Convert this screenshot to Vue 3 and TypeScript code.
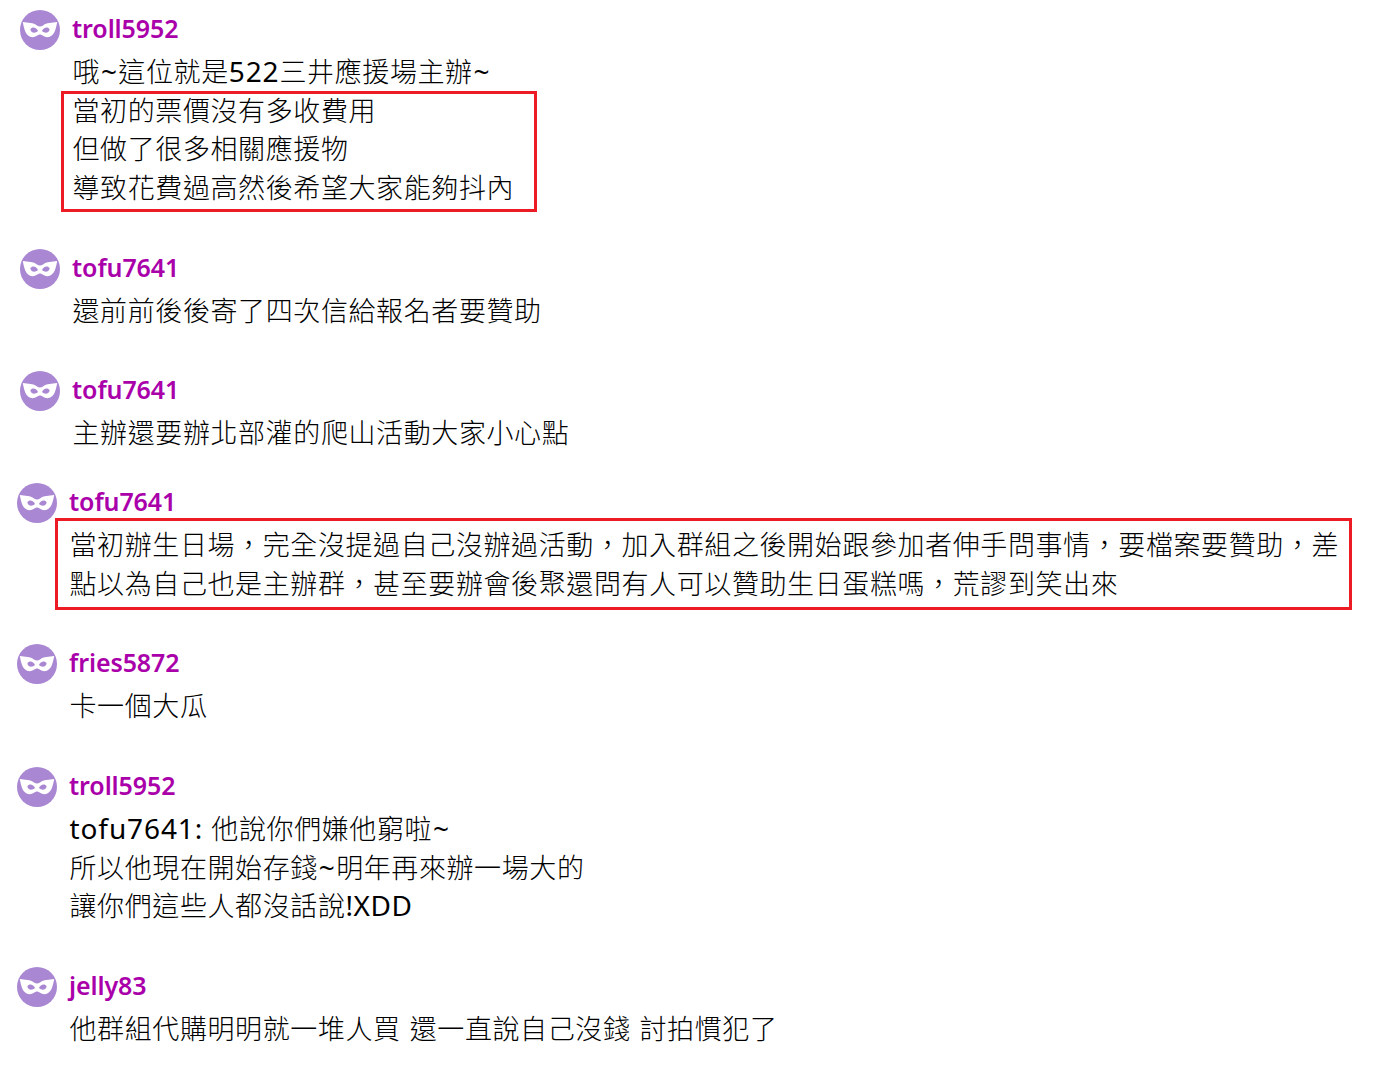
<template>
  <main class="thread">
    <section v-for="(group, g) in groups" :key="g" class="group" :class="{ shifted: g > 0 }">
      <article v-for="(message, m) in group" :key="m" class="message">
        <svg class="avatar" viewBox="0 0 40 40" aria-hidden="true">
          <defs>
            <filter :id="`soft-${g}-${m}`" x="-10%" y="-20%" width="120%" height="140%">
              <feGaussianBlur stdDeviation="0.75" />
            </filter>
          </defs>
          <circle cx="20" cy="20" r="20" fill="#aa87d2" />
          <path :filter="`url(#soft-${g}-${m})`" fill="#fff" fill-rule="evenodd" :d="maskPath" />
        </svg>
        <div class="content">
          <div class="name">{{ message.name }}</div>
          <div class="body">
            <div
              v-for="(block, b) in message.blocks"
              :key="b"
              class="block"
              :class="block.mark ? ['marked', block.mark] : []"
            >
              <p v-for="(line, l) in block.lines" :key="l" class="line">
                <span v-for="(run, r) in splitRuns(line)" :key="r" :class="runClass(run)">{{ run }}</span>
              </p>
            </div>
          </div>
        </div>
      </article>
    </section>
  </main>
</template>

<script setup lang="ts">
interface Block {
  lines: string[]
  mark?: 'narrow' | 'wide'
}

interface Message {
  name: string
  blocks: Block[]
}

const maskPath =
  'M2.8 12 C8 12.6 13.5 12.8 17 15.4 Q20 17.6 23 15.4 C26.5 12.8 32 12.6 37.2 12 ' +
  'C36 18.5 34.5 26.8 27.5 27.2 C23.8 27.2 22 24.6 20 24.6 C18 24.6 16.2 27.2 12.5 27.2 C5.5 26.8 4 18.5 2.8 12 Z ' +
  'M10.4 19.2 C10.6 22.6 14.8 24 18 21 C16.6 17.2 12 16.4 10.4 19.2 Z ' +
  'M29.6 19.2 C29.4 22.6 25.2 24 22 21 C23.4 17.2 28 16.4 29.6 19.2 Z'

const groups: Message[][] = [
  [
    {
      name: 'troll5952',
      blocks: [
        { lines: ['哦~這位就是522三井應援場主辦~'] },
        { lines: ['當初的票價沒有多收費用', '但做了很多相關應援物', '導致花費過高然後希望大家能夠抖內'], mark: 'narrow' }
      ]
    },
    { name: 'tofu7641', blocks: [{ lines: ['還前前後後寄了四次信給報名者要贊助'] }] },
    { name: 'tofu7641', blocks: [{ lines: ['主辦還要辦北部灌的爬山活動大家小心點'] }] }
  ],
  [
    {
      name: 'tofu7641',
      blocks: [
        {
          lines: [
            '當初辦生日場，完全沒提過自己沒辦過活動，加入群組之後開始跟參加者伸手問事情，要檔案要贊助，差',
            '點以為自己也是主辦群，甚至要辦會後聚還問有人可以贊助生日蛋糕嗎，荒謬到笑出來'
          ],
          mark: 'wide'
        }
      ]
    },
    { name: 'fries5872', blocks: [{ lines: ['卡一個大瓜'] }] },
    {
      name: 'troll5952',
      blocks: [{ lines: ['tofu7641: 他說你們嫌他窮啦~', '所以他現在開始存錢~明年再來辦一場大的', '讓你們這些人都沒話說!XDD'] }]
    },
    { name: 'jelly83', blocks: [{ lines: ['他群組代購明明就一堆人買 還一直說自己沒錢 討拍慣犯了'] }] }
  ]
]

// 中英文分段，字距不同
const splitRuns = (line: string): string[] => line.match(/[\x20-\x7e]+|[^\x20-\x7e]+/g) ?? []

const runClass = (run: string) => ({
  latin: /^[\x20-\x7e]/.test(run),
  caps: /[A-Z]/.test(run),
  tilde: run === '~',
  space: run === ' '
})
</script>

<style>
body {
  margin: 0;
  background: #fff;
}
</style>

<style scoped>
.thread {
  box-sizing: border-box;
  height: 1065px;
  padding-top: 10px;
  overflow: hidden;
  background: #fff;
  color: #000;
  font-family: "Noto Sans CJK TC", sans-serif;
}

.group {
  padding-left: 20px;
}

.group.shifted {
  padding-left: 17px;
  margin-top: -10.3px;
}

.message {
  display: flex;
  gap: 12px;
  padding-bottom: 41.8px;
}

.avatar {
  flex: none;
  width: 40px;
  height: 40px;
}

.name {
  height: 41.9px;
  color: #aa00aa;
  font-family: "Noto Sans", sans-serif;
  font-size: 25px;
  font-weight: 600;
  line-height: 36px;
  letter-spacing: -0.1px;
}

.block {
  position: relative;
}

.line {
  height: 38.75px;
  margin: 0;
  padding-left: 0.5px;
  font-size: 27px;
  font-weight: 300;
  line-height: 38.75px;
  letter-spacing: 0.6px;
  white-space: pre;
}

.latin {
  font-family: "Noto Sans", sans-serif;
  font-size: 28px;
  font-weight: 400;
  line-height: 1;
  letter-spacing: 0.9px;
}

.caps {
  letter-spacing: 0.5px;
}

.tilde {
  padding-left: 0.9px;
  letter-spacing: 1.3px;
}

.space {
  letter-spacing: 1.7px;
}

.marked::after {
  content: "";
  position: absolute;
  box-sizing: border-box;
  border: 3px solid #ed1c24;
}

.narrow::after {
  top: 0.4px;
  left: -11px;
  width: 476px;
  height: 121px;
}

.wide::after {
  top: -7.2px;
  left: -14px;
  width: 1297px;
  height: 92px;
}
</style>
